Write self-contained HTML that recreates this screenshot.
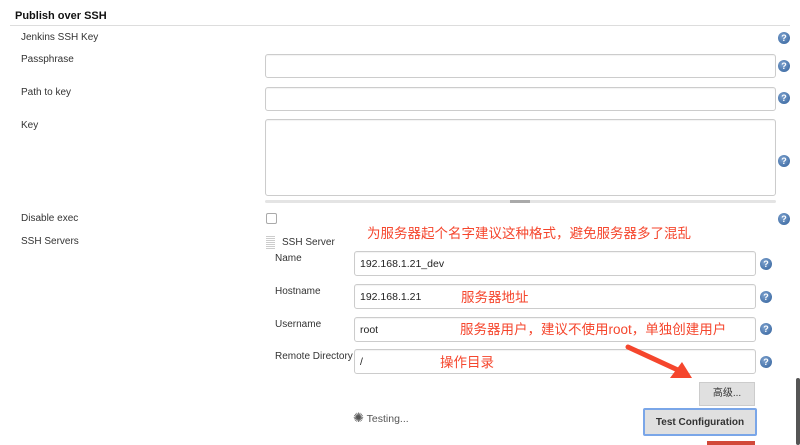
<!DOCTYPE html>
<html><head><meta charset="utf-8"><style>
body{margin:0;width:800px;height:445px;overflow:hidden;background:#fff;font-family:"Liberation Sans","Noto Sans CJK SC",sans-serif;font-size:10px;color:#333;position:relative}
.a{position:absolute;white-space:nowrap}
.in{position:absolute;border:1px solid #ccc;border-radius:3px;background:#fff;box-sizing:border-box;box-shadow:inset 0 1px 1px rgba(0,0,0,.05)}
.h{position:absolute;width:12px;height:12px;border-radius:50%;background:radial-gradient(circle at 40% 35%,#7fa3cf,#2f5f9a);color:#fff;font-size:9px;font-weight:bold;text-align:center;line-height:12px}
.r{position:absolute;color:#f5462d;font-size:13.5px;white-space:nowrap}
.v{position:absolute;left:5px;top:6px;font-size:10.5px;color:#222}
</style></head><body>
<div class="a" style="left:15px;top:10px;font-weight:bold;font-size:11px;color:#111">Publish over SSH</div>
<div class="a" style="left:10px;top:25px;width:780px;height:1px;background:#ddd"></div>
<div class="a" style="left:21px;top:32px">Jenkins SSH Key</div>
<div class="a" style="left:21px;top:54px">Passphrase</div>
<div class="a" style="left:21px;top:87px">Path to key</div>
<div class="a" style="left:21px;top:120px">Key</div>
<div class="a" style="left:21px;top:213px">Disable exec</div>
<div class="a" style="left:21px;top:236px">SSH Servers</div>
<div class="in" style="left:265px;top:54px;width:511px;height:24px"></div>
<div class="in" style="left:265px;top:87px;width:511px;height:24px"></div>
<div class="in" style="left:265px;top:119px;width:511px;height:77px"></div>
<div class="a" style="left:265px;top:200px;width:511px;height:3px;background:#e4e4e4;border-radius:2px"></div>
<div class="a" style="left:510px;top:200px;width:20px;height:3px;background:#aaa"></div>
<div class="h" style="left:778px;top:32px">?</div>
<div class="h" style="left:778px;top:60px">?</div>
<div class="h" style="left:778px;top:92px">?</div>
<div class="h" style="left:778px;top:155px">?</div>
<div class="h" style="left:778px;top:213px">?</div>
<div class="a" style="left:266px;top:213px;width:9px;height:9px;border:1px solid #aaa;border-radius:2px"></div>
<div class="r" style="left:367px;top:222px">为服务器起个名字建议这种格式，避免服务器多了混乱</div>
<div class="a" style="left:266px;top:236px;width:9px;height:13px;background:repeating-linear-gradient(0deg,#ccc 0 1px,#fff 1px 2px)"></div>
<div class="a" style="left:282px;top:237px">SSH Server</div>
<div class="a" style="left:275px;top:253px">Name</div>
<div class="a" style="left:275px;top:286px">Hostname</div>
<div class="a" style="left:275px;top:319px">Username</div>
<div class="a" style="left:275px;top:351px">Remote Directory</div>
<div class="in" style="left:354px;top:251px;width:402px;height:25px"><span class="v">192.168.1.21_dev</span></div>
<div class="in" style="left:354px;top:284px;width:402px;height:25px"><span class="v">192.168.1.21</span></div>
<div class="in" style="left:354px;top:317px;width:402px;height:25px"><span class="v">root</span></div>
<div class="in" style="left:354px;top:349px;width:402px;height:25px"><span class="v">/</span></div>
<div class="h" style="left:760px;top:258px">?</div>
<div class="h" style="left:760px;top:291px">?</div>
<div class="h" style="left:760px;top:323px">?</div>
<div class="h" style="left:760px;top:356px">?</div>
<div class="r" style="left:461px;top:286px">服务器地址</div>
<div class="r" style="left:460px;top:318px">服务器用户，建议不使用root，单独创建用户</div>
<div class="r" style="left:440px;top:351px">操作目录</div>
<svg class="a" style="left:620px;top:340px" width="80" height="45"><line x1="8" y1="7" x2="60" y2="31" stroke="#f5462d" stroke-width="5" stroke-linecap="round"/><polygon points="72,38 50,38 62,22" fill="#f5462d"/></svg>
<div class="a" style="left:699px;top:382px;width:56px;height:24px;background:#e0e0e0;border:1px solid #ccc;box-sizing:border-box;text-align:center;line-height:22px;font-size:10px">高级...</div>
<div class="a" style="left:643px;top:408px;width:114px;height:28px;background:#e0e0e0;border:2px solid #7aa6e8;border-radius:2px;box-sizing:border-box;text-align:center;line-height:26px;font-weight:bold;font-size:10px;color:#333">Test Configuration</div>
<div class="a" style="left:353px;top:410px;color:#555;font-size:10.5px"><span style="color:#555;font-size:13px">✺</span> Testing...</div>
<div class="a" style="left:707px;top:441px;width:48px;height:4px;background:#d24939"></div>
<div class="a" style="left:796px;top:378px;width:4px;height:67px;background:#555;border-radius:2px"></div>
</body></html>
